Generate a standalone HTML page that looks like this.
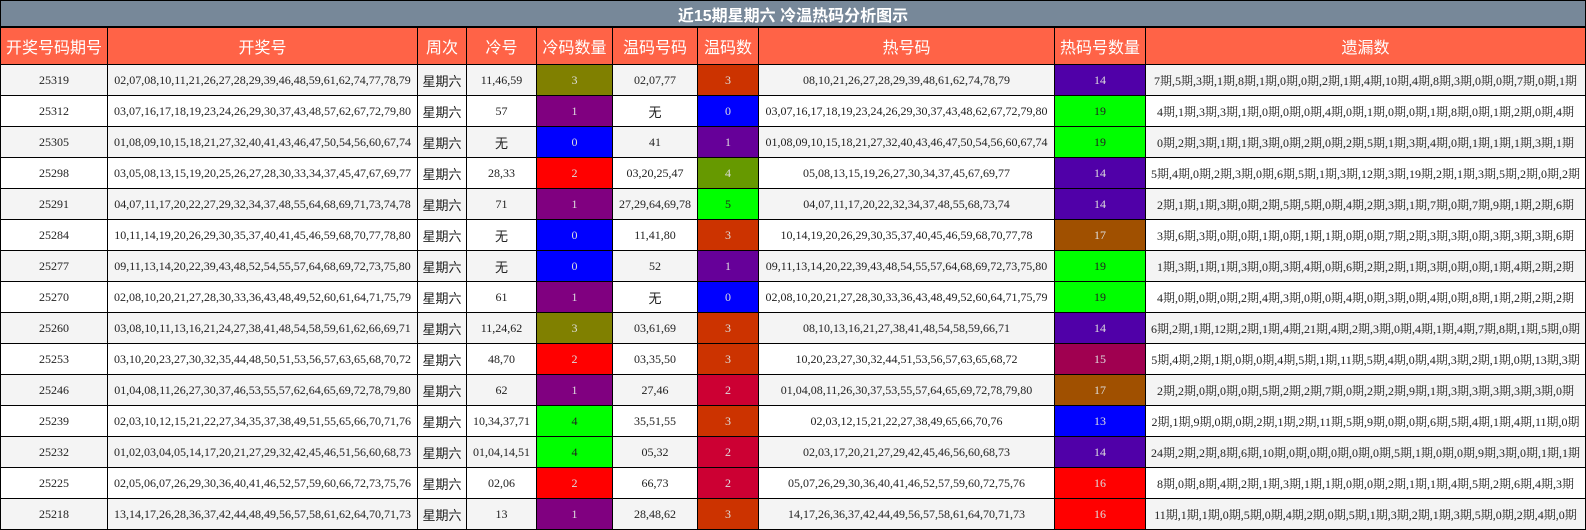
<!DOCTYPE html>
<html><head><meta charset="utf-8"><style>
body{margin:0;background:#fff;width:1586px;height:530px;overflow:hidden}
table{border-collapse:collapse;table-layout:fixed;width:1585px;font-family:"Liberation Serif","Noto Serif CJK SC",serif;font-size:12px;color:#222}
td,th{border:1px solid #000;text-align:center;padding:0;white-space:nowrap;overflow:hidden}
.t{background:#778899;color:#fff;font-family:"Liberation Sans","Noto Sans CJK SC",sans-serif;font-size:16px;font-weight:bold;height:25px;border-bottom:2px solid #000}
.h th{background:#ff6347;color:#fff;font-family:"Liberation Sans","Noto Sans CJK SC",sans-serif;font-weight:normal;font-size:16px;height:36px}
tr.r td{height:30px}
tr.r:nth-child(odd) td{background:#f4f4f4}
tr.r td.c{color:#ddd}
.w{font-family:"Noto Sans CJK SC",sans-serif;font-size:13px}
</style></head><body>
<table>
<colgroup><col style="width:107px"><col style="width:310px"><col style="width:49px"><col style="width:70px"><col style="width:76px"><col style="width:85px"><col style="width:61px"><col style="width:296px"><col style="width:91px"><col style="width:440px"></colgroup>
<tr><td class="t" colspan="10">近15期星期六 冷温热码分析图示</td></tr>
<tr class="h"><th>开奖号码期号</th><th>开奖号</th><th>周次</th><th>冷号</th><th>冷码数量</th><th>温码号码</th><th>温码数</th><th>热号码</th><th>热码号数量</th><th>遗漏数</th></tr>
<tbody id="b"></tbody>
</table>
<script>
var d=[
["25319","02,07,08,10,11,21,26,27,28,29,39,46,48,59,61,62,74,77,78,79","11,46,59","3","#808000","02,07,77","3","#cc3300","08,10,21,26,27,28,29,39,48,61,62,74,78,79","14","#5000a8","7期,5期,3期,1期,8期,1期,0期,0期,2期,1期,4期,10期,4期,8期,3期,0期,0期,7期,0期,1期"],
["25312","03,07,16,17,18,19,23,24,26,29,30,37,43,48,57,62,67,72,79,80","57","1","#800080","无","0","#0000ff","03,07,16,17,18,19,23,24,26,29,30,37,43,48,62,67,72,79,80","19","#00ff00","4期,1期,3期,3期,1期,0期,0期,0期,4期,0期,1期,0期,0期,1期,8期,0期,1期,2期,0期,4期"],
["25305","01,08,09,10,15,18,21,27,32,40,41,43,46,47,50,54,56,60,67,74","无","0","#0000ff","41","1","#660099","01,08,09,10,15,18,21,27,32,40,43,46,47,50,54,56,60,67,74","19","#00ff00","0期,2期,3期,1期,1期,3期,0期,2期,0期,2期,5期,1期,3期,4期,0期,1期,1期,1期,3期,1期"],
["25298","03,05,08,13,15,19,20,25,26,27,28,30,33,34,37,45,47,67,69,77","28,33","2","#ff0000","03,20,25,47","4","#669900","05,08,13,15,19,26,27,30,34,37,45,67,69,77","14","#5000a8","5期,4期,0期,2期,3期,0期,6期,5期,1期,3期,12期,3期,19期,2期,1期,3期,5期,2期,0期,2期"],
["25291","04,07,11,17,20,22,27,29,32,34,37,48,55,64,68,69,71,73,74,78","71","1","#800080","27,29,64,69,78","5","#00ff00","04,07,11,17,20,22,32,34,37,48,55,68,73,74","14","#5000a8","2期,1期,1期,3期,0期,2期,5期,5期,0期,4期,2期,3期,1期,7期,0期,7期,9期,1期,2期,6期"],
["25284","10,11,14,19,20,26,29,30,35,37,40,41,45,46,59,68,70,77,78,80","无","0","#0000ff","11,41,80","3","#cc3300","10,14,19,20,26,29,30,35,37,40,45,46,59,68,70,77,78","17","#a05000","3期,6期,3期,0期,0期,1期,0期,1期,1期,0期,0期,7期,2期,3期,3期,0期,3期,3期,3期,6期"],
["25277","09,11,13,14,20,22,39,43,48,52,54,55,57,64,68,69,72,73,75,80","无","0","#0000ff","52","1","#660099","09,11,13,14,20,22,39,43,48,54,55,57,64,68,69,72,73,75,80","19","#00ff00","1期,3期,1期,1期,3期,0期,3期,4期,0期,6期,2期,2期,1期,3期,0期,0期,1期,4期,2期,2期"],
["25270","02,08,10,20,21,27,28,30,33,36,43,48,49,52,60,61,64,71,75,79","61","1","#800080","无","0","#0000ff","02,08,10,20,21,27,28,30,33,36,43,48,49,52,60,64,71,75,79","19","#00ff00","4期,0期,0期,0期,2期,4期,3期,0期,0期,4期,0期,3期,0期,4期,0期,8期,1期,2期,2期,2期"],
["25260","03,08,10,11,13,16,21,24,27,38,41,48,54,58,59,61,62,66,69,71","11,24,62","3","#808000","03,61,69","3","#cc3300","08,10,13,16,21,27,38,41,48,54,58,59,66,71","14","#5000a8","6期,2期,1期,12期,2期,1期,4期,21期,4期,2期,3期,0期,4期,1期,4期,7期,8期,1期,5期,0期"],
["25253","03,10,20,23,27,30,32,35,44,48,50,51,53,56,57,63,65,68,70,72","48,70","2","#ff0000","03,35,50","3","#cc3300","10,20,23,27,30,32,44,51,53,56,57,63,65,68,72","15","#a00050","5期,4期,2期,1期,0期,0期,4期,5期,1期,11期,5期,4期,0期,4期,3期,2期,1期,0期,13期,3期"],
["25246","01,04,08,11,26,27,30,37,46,53,55,57,62,64,65,69,72,78,79,80","62","1","#800080","27,46","2","#cc0033","01,04,08,11,26,30,37,53,55,57,64,65,69,72,78,79,80","17","#a05000","2期,2期,0期,0期,0期,5期,2期,2期,7期,0期,2期,2期,9期,1期,3期,3期,3期,3期,3期,0期"],
["25239","02,03,10,12,15,21,22,27,34,35,37,38,49,51,55,65,66,70,71,76","10,34,37,71","4","#00ff00","35,51,55","3","#cc3300","02,03,12,15,21,22,27,38,49,65,66,70,76","13","#0000ff","2期,1期,9期,0期,0期,2期,1期,2期,11期,5期,9期,0期,0期,6期,5期,4期,1期,4期,11期,0期"],
["25232","01,02,03,04,05,14,17,20,21,27,29,32,42,45,46,51,56,60,68,73","01,04,14,51","4","#00ff00","05,32","2","#cc0033","02,03,17,20,21,27,29,42,45,46,56,60,68,73","14","#5000a8","24期,2期,2期,8期,6期,10期,0期,0期,0期,0期,0期,5期,1期,0期,0期,9期,3期,0期,1期,1期"],
["25225","02,05,06,07,26,29,30,36,40,41,46,52,57,59,60,66,72,73,75,76","02,06","2","#ff0000","66,73","2","#cc0033","05,07,26,29,30,36,40,41,46,52,57,59,60,72,75,76","16","#ff0000","8期,0期,8期,4期,2期,1期,3期,1期,1期,0期,0期,2期,1期,1期,4期,5期,2期,6期,4期,3期"],
["25218","13,14,17,26,28,36,37,42,44,48,49,56,57,58,61,62,64,70,71,73","13","1","#800080","28,48,62","3","#cc3300","14,17,26,36,37,42,44,49,56,57,58,61,64,70,71,73","16","#ff0000","11期,1期,1期,0期,5期,0期,4期,2期,0期,5期,1期,3期,2期,1期,3期,5期,0期,2期,4期,0期"]];
var h="";
d.forEach(function(r){
function c(v,bg){return '<td class="c" style="background:'+bg+(bg=="#00ff00"?';color:#222':'')+'">'+v+'</td>';}
function t(v){return v=="无"?'<td class="w">无</td>':'<td>'+v+'</td>';}
h+='<tr class="r"><td>'+r[0]+'</td><td>'+r[1]+'</td><td class="w">星期六</td>'+t(r[2])+c(r[3],r[4])+t(r[5])+c(r[6],r[7])+'<td>'+r[8]+'</td>'+c(r[9],r[10])+'<td>'+r[11]+'</td></tr>';
});
document.getElementById("b").innerHTML=h;
</script>
</body></html>
